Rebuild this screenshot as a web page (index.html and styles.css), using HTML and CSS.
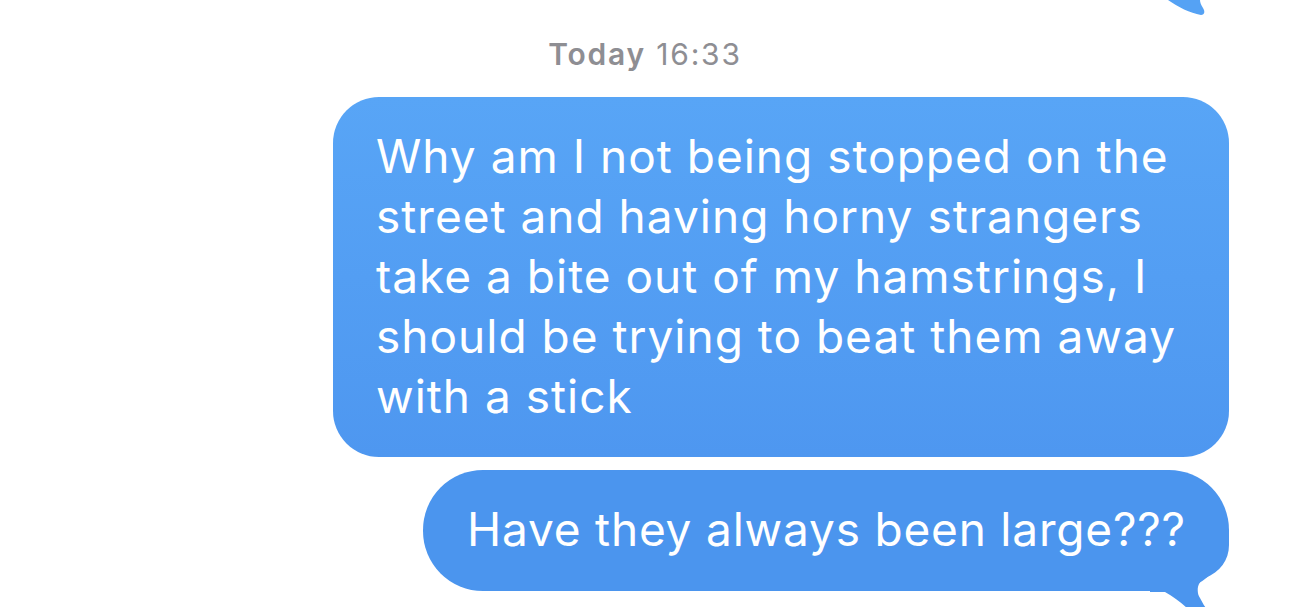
FILE: index.html
```html
<!DOCTYPE html>
<html lang="en">
<head>
<meta charset="utf-8">
<title>Messages</title>
<link rel="stylesheet" href="styles.css">
</head>
<body>
<div class="thread">
  <svg class="prev-tail" width="80" height="25" viewBox="0 0 80 25" aria-hidden="true">
    <path d="M18,0 C28,7 40,13 51,15 C55,15 55,11 53,8 C51,5 50,2 50,0 Z" fill="#55a2f4"/>
  </svg>
  <div class="stamp"><span class="stamp-day">Today</span> 16:33</div>
  <div class="bubble bubble-long"><span class="bubble-text">Why am I not being stopped on the<br>street and having horny strangers<br>take a bite out of my hamstrings, I<br>should be trying to beat them away<br>with a stick</span></div>
  <div class="bubble bubble-short">
    <svg class="tail" width="80" height="90" viewBox="0 0 80 90" aria-hidden="true">
      <path d="M79,0 L79,15 C79,30 70,42 55,48 C47,52 46,62 50,68 C53,74 58,82 64,88 L50,88 C40,82 30,70 15,62 L0,62 L0,0 Z" fill="#4b95ee"/>
    </svg>
    <span class="bubble-text">Have they always been large???</span>
  </div>
</div>
</body>
</html>
```

FILE: styles.css
```css
html, body {
  margin: 0;
  padding: 0;
  background: #ffffff;
  overflow: hidden;
}

.thread {
  position: relative;
  width: 1290px;
  height: 607px;
  box-sizing: border-box;
  display: flex;
  flex-direction: column;
  align-items: flex-end;
  padding: 35px 61px 0 0;
  font-family: Inter, "Liberation Sans", sans-serif;
}

.prev-tail {
  position: absolute;
  left: 1150px;
  top: 0;
}

.stamp {
  align-self: center;
  margin-right: -61px;
  font-size: 30px;
  line-height: 38px;
  color: #8e8e93;
  font-weight: 400;
  letter-spacing: 1.8px;
}

.stamp-day {
  font-weight: 600;
}

.bubble {
  position: relative;
  color: #ffffff;
  font-size: 46px;
  line-height: 60px;
  letter-spacing: 1px;
  box-sizing: border-box;
  white-space: nowrap;
}

.bubble-text {
  position: relative;
  z-index: 1;
}

.bubble-long {
  margin-top: 24px;
  width: 896px;
  height: 360px;
  padding: 29px 0 0 43px;
  border-radius: 46px;
  background: linear-gradient(180deg, #58a5f6 0%, #4e97f0 100%);
}

.bubble-short {
  margin-top: 13px;
  width: 806px;
  height: 121px;
  padding: 29px 0 0 44px;
  border-radius: 60px;
  background: #4b95ee;
  letter-spacing: 0.8px;
}

.tail {
  position: absolute;
  right: -1px;
  top: 60px;
  z-index: 0;
}
```
